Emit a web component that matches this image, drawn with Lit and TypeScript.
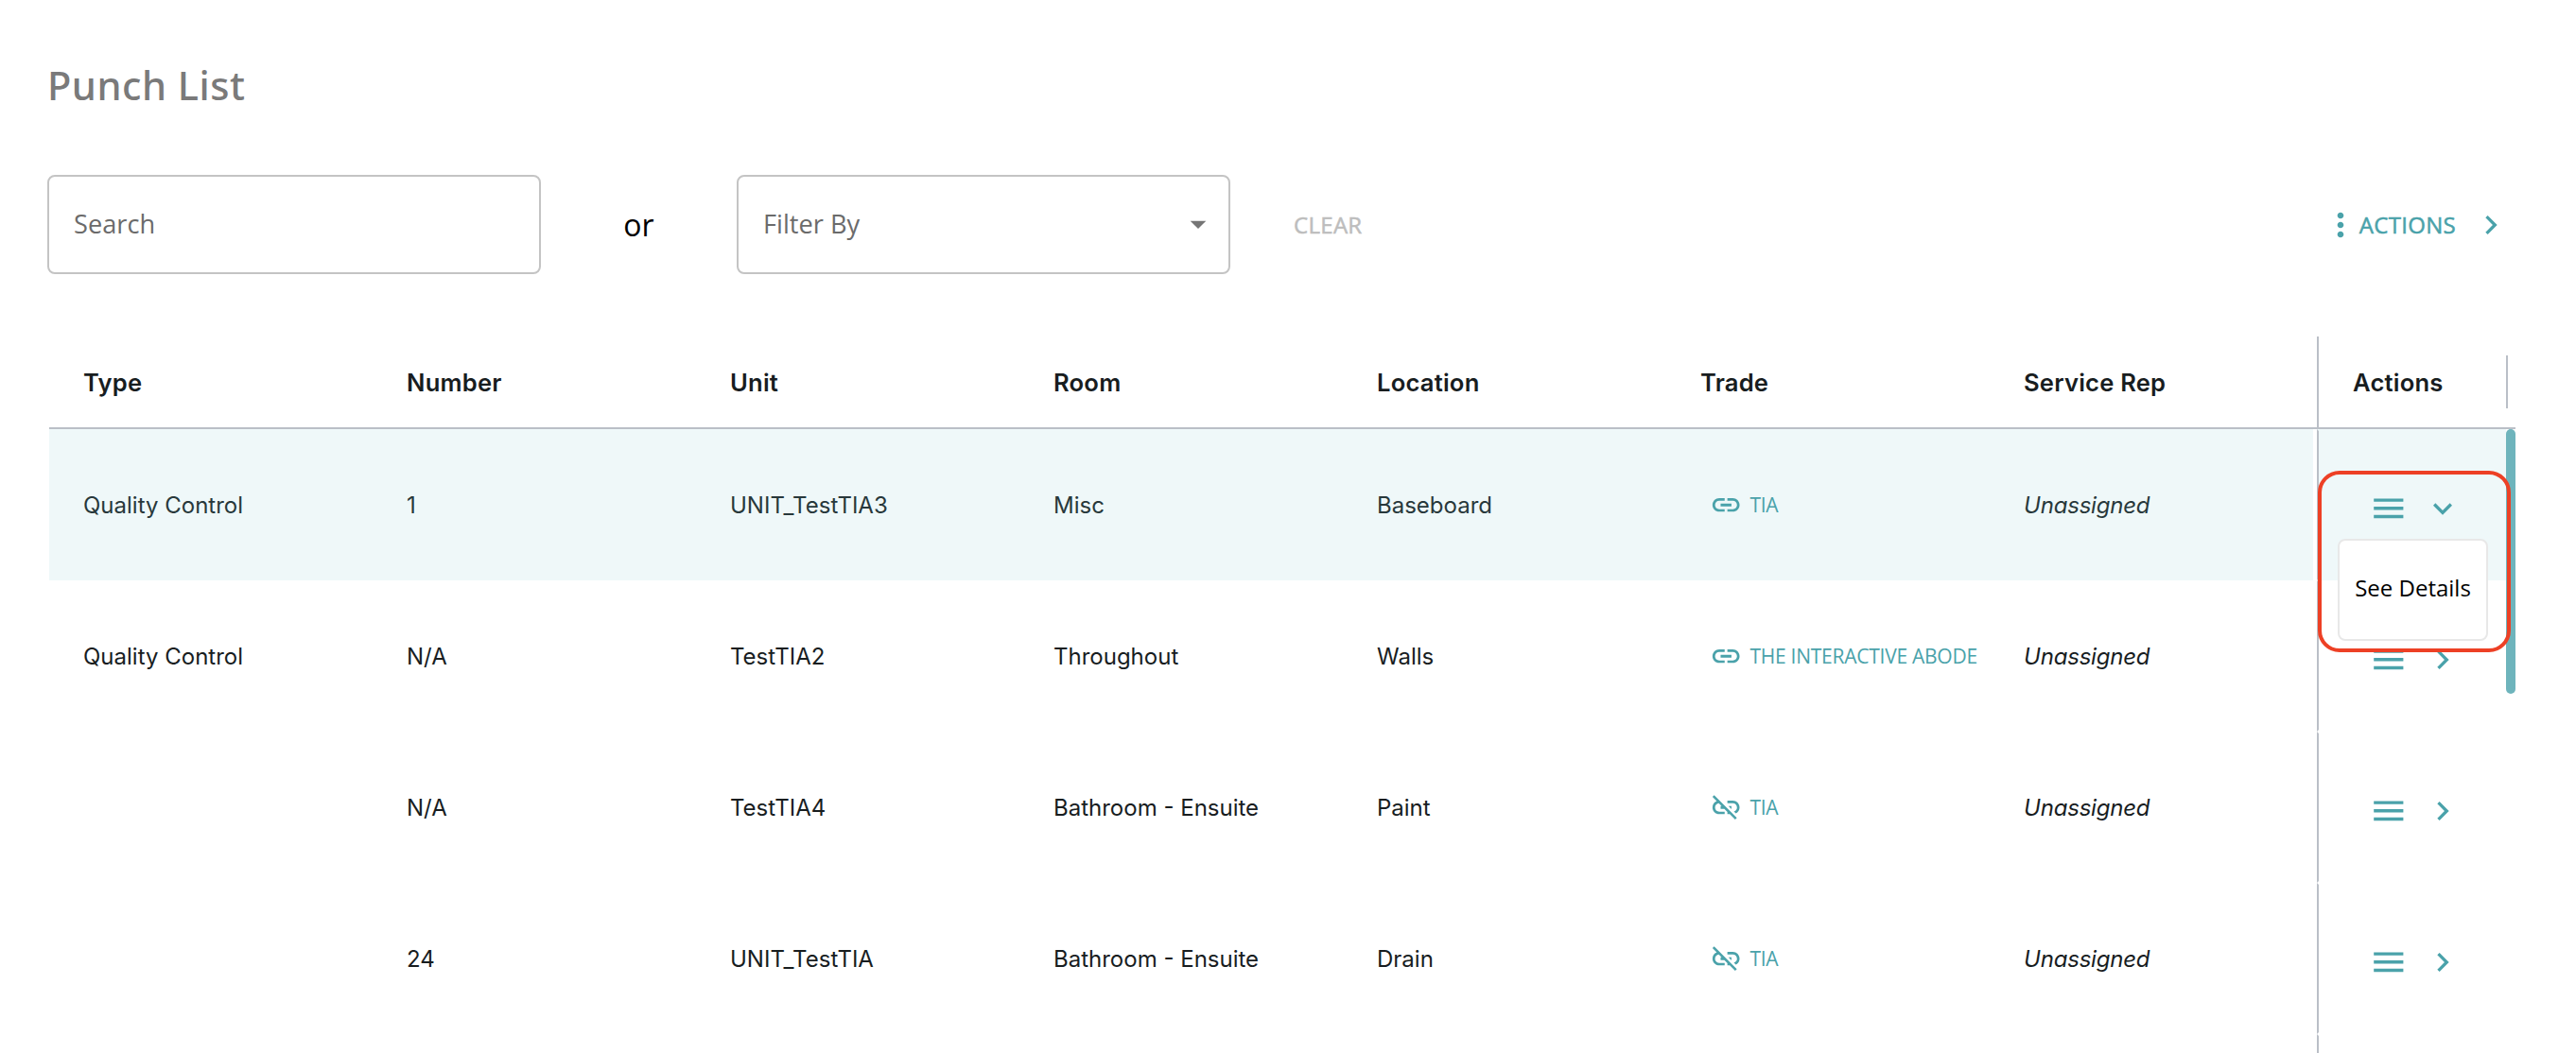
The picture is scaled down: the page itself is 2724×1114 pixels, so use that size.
import { LitElement, html, css, svg, nothing } from 'lit';
import { customElement, property } from 'lit/decorators.js';
import { classMap } from 'lit/directives/class-map.js';

interface PunchItem {
  type: string;
  number: string;
  unit: string;
  room: string;
  location: string;
  trade: string;
  linked: boolean;
  serviceRep: string;
}

const COLUMNS = ['Type', 'Number', 'Unit', 'Room', 'Location', 'Trade', 'Service Rep'];

const ITEMS: PunchItem[] = [
  { type: 'Quality Control', number: '1', unit: 'UNIT_TestTIA3', room: 'Misc', location: 'Baseboard', trade: 'TIA', linked: true, serviceRep: 'Unassigned' },
  { type: 'Quality Control', number: 'N/A', unit: 'TestTIA2', room: 'Throughout', location: 'Walls', trade: 'THE INTERACTIVE ABODE', linked: true, serviceRep: 'Unassigned' },
  { type: '', number: 'N/A', unit: 'TestTIA4', room: 'Bathroom - Ensuite', location: 'Paint', trade: 'TIA', linked: false, serviceRep: 'Unassigned' },
  { type: '', number: '24', unit: 'UNIT_TestTIA', room: 'Bathroom - Ensuite', location: 'Drain', trade: 'TIA', linked: false, serviceRep: 'Unassigned' },
  { type: '', number: '', unit: '', room: '', location: '', trade: '', linked: false, serviceRep: '' },
];

const ICONS = {
  link: svg`<path d="M3.9 12c0-1.71 1.39-3.1 3.1-3.1h4V7H7c-2.76 0-5 2.24-5 5s2.24 5 5 5h4v-1.9H7c-1.71 0-3.1-1.39-3.1-3.1zM8 13h8v-2H8v2zm9-6h-4v1.9h4c1.71 0 3.1 1.39 3.1 3.1s-1.39 3.1-3.1 3.1h-4V17h4c2.76 0 5-2.24 5-5s-2.24-5-5-5z"/>`,
  linkOff: svg`<path d="M17 7h-4v1.9h4c1.71 0 3.1 1.39 3.1 3.1 0 1.43-.98 2.63-2.31 2.98l1.46 1.46C20.88 15.61 22 13.95 22 12c0-2.76-2.24-5-5-5zm-1 4h-2.19l2 2H16v-2zM2 4.27l3.11 3.11C3.29 8.12 2 9.91 2 12c0 2.76 2.24 5 5 5h4v-1.9H7c-1.71 0-3.1-1.39-3.1-3.1 0-1.59 1.21-2.9 2.76-3.07L8.73 11H8v2h2.73L13 15.27V17h1.73l4.01 4L20 19.74 3.27 3 2 4.27z"/>`,
  menu: svg`<path d="M3 18h18v-2H3v2zm0-5h18v-2H3v2zm0-7v2h18V6H3z"/>`,
  more: svg`<path d="M12 8c1.1 0 2-.9 2-2s-.9-2-2-2-2 .9-2 2 .9 2 2 2zm0 2c-1.1 0-2 .9-2 2s.9 2 2 2 2-.9 2-2-.9-2-2-2zm0 6c-1.1 0-2 .9-2 2s.9 2 2 2 2-.9 2-2-.9-2-2-2z"/>`,
  right: svg`<path d="M10 6 8.59 7.41 13.17 12l-4.58 4.59L10 18l6-6z"/>`,
  down: svg`<path d="M7.41 8.59 12 13.17l4.59-4.58L18 10l-6 6-6-6 1.41-1.41z"/>`,
  dropdown: svg`<path d="M7 10l5 5 5-5z"/>`,
};

type IconName = keyof typeof ICONS;

@customElement('punch-icon')
export class PunchIcon extends LitElement {
  @property() name: IconName = 'menu';

  static styles = css`
    :host {
      display: block;
      flex: none;
      width: 40px;
      height: 40px;
    }

    svg {
      display: block;
      width: 100%;
      height: 100%;
      fill: currentColor;
    }
  `;

  render() {
    return html`<svg viewBox="0 0 24 24">${ICONS[this.name]}</svg>`;
  }
}

@customElement('punch-toolbar')
export class PunchToolbar extends LitElement {
  static styles = css`
    :host {
      display: flex;
      align-items: center;
      height: 105px;
      padding: 0 70px 0 50px;
      font-family: 'Open Sans', sans-serif;
    }

    .field {
      box-sizing: border-box;
      display: flex;
      align-items: center;
      justify-content: space-between;
      width: 522px;
      height: 105px;
      padding: 0 12px 2px 26px;
      border: 2px solid #c4c4c4;
      border-radius: 8px;
      color: #6b6b6b;
      font-size: 27.2px;
    }

    .field punch-icon {
      color: #757575;
    }

    .or {
      width: 207px;
      text-align: center;
      font-size: 32px;
      color: #000;
    }

    /* Open Sans has no medium face here, a thin stroke stands in for it */
    .clear,
    .label {
      font-size: 24px;
      letter-spacing: 0.3px;
      -webkit-text-stroke: 0.5px currentColor;
    }

    .clear {
      margin-left: 67px;
      color: #bdbdbd;
    }

    .actions {
      display: flex;
      align-items: center;
      margin-left: auto;
      color: #4aa2aa;
    }

    .label {
      margin-right: 17px;
    }
  `;

  render() {
    return html`
      <div class="field">Search</div>
      <div class="or">or</div>
      <div class="field">Filter By <punch-icon name="dropdown"></punch-icon></div>
      <div class="clear">CLEAR</div>
      <div class="actions">
        <punch-icon name="more"></punch-icon>
        <span class="label">ACTIONS</span>
        <punch-icon name="right"></punch-icon>
      </div>
    `;
  }
}

@customElement('punch-grid')
export class PunchGrid extends LitElement {
  @property({ attribute: false }) items: PunchItem[] = [];
  @property({ type: Number }) openIndex = 0;

  static styles = css`
    :host {
      display: block;
      position: relative;
      width: 2608px;
      margin-left: 52px;
      font-family: Inter, sans-serif;
      color: #181d1f;
    }

    .header,
    .row {
      display: flex;
    }

    .header {
      box-sizing: border-box;
      height: 98px;
      border-bottom: 2px solid #babfc7;
      font-size: 25.6px;
      font-weight: 600;
      letter-spacing: 0.2px;
    }

    .cells {
      display: grid;
      grid-template-columns: repeat(7, 342px);
      align-items: center;
      margin-right: 4px;
    }

    .cell {
      padding-left: 36px;
      white-space: nowrap;
    }

    .header-actions {
      display: flex;
      align-items: center;
      justify-content: space-between;
      width: 164px;
      padding-left: 36px;
      border-left: 2px solid #babfc7;
    }

    .resize {
      width: 2px;
      height: 56px;
      background: #babfc7;
    }

    .row {
      height: 160px;
      font-size: 24px;
    }

    .open {
      color: #28383b;
    }

    .open .cells,
    .open .row-actions {
      background: #eff8f9;
    }

    .rep {
      font-style: italic;
      letter-spacing: -0.2px;
    }

    .trade {
      display: flex;
      align-items: center;
      gap: 8px;
      padding-left: 46px;
      color: #4aa2aa;
      font-family: 'Open Sans', sans-serif;
      font-size: 21px;
      letter-spacing: -0.25px;
    }

    .trade punch-icon {
      width: 34.4px;
      height: 34.4px;
    }

    .row-actions {
      box-sizing: border-box;
      display: flex;
      align-items: center;
      gap: 16px;
      width: 200px;
      padding: 7px 0 0 53px;
      border: 2px solid transparent;
      border-left-color: #babfc7;
      color: #4aa2aa;
    }

    .row-actions .menu {
      width: 41.6px;
      height: 41.6px;
    }

    .scrollbar {
      position: absolute;
      top: 98px;
      right: 0;
      width: 10px;
      height: 280px;
      border-radius: 5px;
      background: #6eb4bc;
    }

    .popup {
      position: absolute;
      top: 214px;
      right: 29px;
      box-sizing: border-box;
      display: flex;
      align-items: center;
      justify-content: center;
      width: 159px;
      height: 108px;
      padding-bottom: 6px;
      border: 2px solid #e8e8e8;
      border-radius: 8px;
      background: #fff;
      color: #000;
      font-family: 'Open Sans', sans-serif;
      font-size: 24px;
      white-space: nowrap;
    }

    .highlight {
      position: absolute;
      top: 142px;
      right: 5px;
      box-sizing: border-box;
      width: 204px;
      height: 192px;
      border: 4px solid #ed4025;
      border-radius: 23px;
    }
  `;

  renderTrade(item: PunchItem) {
    if (!item.trade) return html`<div></div>`;
    return html`
      <div class="cell trade">
        <punch-icon name=${item.linked ? 'link' : 'linkOff'}></punch-icon>
        <span class="trade-name">${item.trade}</span>
      </div>
    `;
  }

  renderRow(item: PunchItem, index: number) {
    const open = index === this.openIndex;
    return html`
      <div class=${classMap({ row: true, open })}>
        <div class="cells">
          <div class="cell">${item.type}</div>
          <div class="cell">${item.number}</div>
          <div class="cell">${item.unit}</div>
          <div class="cell">${item.room}</div>
          <div class="cell">${item.location}</div>
          ${this.renderTrade(item)}
          <div class="cell rep">${item.serviceRep}</div>
        </div>
        <div class="row-actions">
          ${item.unit
            ? html`
                <punch-icon class="menu" name="menu"></punch-icon>
                <punch-icon name=${open ? 'down' : 'right'}></punch-icon>
              `
            : nothing}
        </div>
      </div>
    `;
  }

  render() {
    return html`
      <div class="header">
        <div class="cells">${COLUMNS.map((name) => html`<div class="cell">${name}</div>`)}</div>
        <div class="header-actions">
          Actions
          <div class="resize"></div>
        </div>
      </div>
      ${this.items.map((item, index) => this.renderRow(item, index))}
      <div class="scrollbar"></div>
      <div class="popup">See Details</div>
      <div class="highlight"></div>
    `;
  }
}

@customElement('app-root')
export class AppRoot extends LitElement {
  static styles = css`
    :host {
      display: block;
      height: 1114px;
      overflow: hidden;
      background: #fff;
    }

    .title {
      box-sizing: border-box;
      height: 185px;
      margin: 0;
      padding: 62px 0 0 50px;
      color: #7a7a7a;
      font: 500 41.6px/57px 'Noto Sans', sans-serif;
      letter-spacing: 0.5px;
    }

    punch-toolbar {
      margin-bottom: 66px;
    }
  `;

  render() {
    return html`
      <h1 class="title">Punch List</h1>
      <punch-toolbar></punch-toolbar>
      <punch-grid .items=${ITEMS}></punch-grid>
    `;
  }
}
